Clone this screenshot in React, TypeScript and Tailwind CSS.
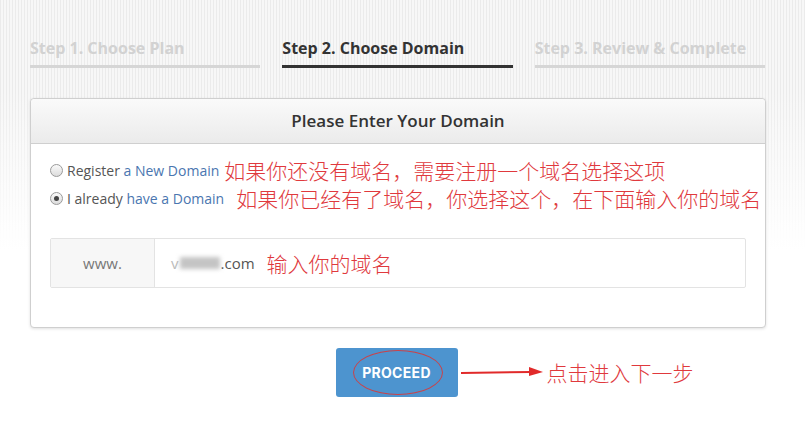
import React from 'react'

const steps = [
  { label: 'Step 1. Choose Plan', active: false },
  { label: 'Step 2. Choose Domain', active: true },
  { label: 'Step 3. Review & Complete', active: false },
]

const cjk = "shrink-0 whitespace-nowrap font-['Noto_Sans_CJK_SC',sans-serif] text-[#e0393d] text-[21px] font-light leading-none"

function Radio({ checked }: { checked: boolean }) {
  return (
    <span className="inline-flex h-[13px] w-[13px] shrink-0 items-center justify-center rounded-full border border-[#9a9a9a] bg-[linear-gradient(#fafafa,#dcdcdc)]">
      {checked && <span className="h-[5px] w-[5px] rounded-full bg-[#444]" />}
    </span>
  )
}

export default function App() {
  return (
    <div className="h-[423px] w-[805px] overflow-hidden bg-white bg-[linear-gradient(to_bottom,rgba(255,255,255,0)_0px,rgba(255,255,255,0)_90px,#fff_250px),repeating-linear-gradient(90deg,#ebebeb_0px,#ebebeb_1px,#f7f7f7_1px,#f7f7f7_3px)] font-['Open_Sans',sans-serif]">
      {/* stepper */}
      <div className="grid grid-cols-3 gap-[22px] px-[30px] pt-[37px] pr-[40px]">
        {steps.map((s) => (
          <div key={s.label}>
            <div
              className={
                'whitespace-nowrap pb-[6px] text-[16px] font-bold leading-[22px] ' +
                (s.active ? 'text-[#333]' : 'text-[#d2d2d2]')
              }
            >
              {s.label}
            </div>
            <div className={'h-[3px] ' + (s.active ? 'bg-[#333]' : 'bg-[#d6d6d6]')} />
          </div>
        ))}
      </div>

      {/* panel */}
      <div className="mx-[30px] mt-[30px] w-[736px] rounded-[4px] border border-[#cfcfcf] bg-white shadow-[0_1px_3px_rgba(0,0,0,0.12)]">
        <div className="flex h-[45px] items-center justify-center rounded-t-[4px] border-b border-[#cfcfcf] bg-[linear-gradient(#fafafa,#ebebeb)] text-[17px] font-semibold text-[#333]">
          Please Enter Your Domain
        </div>
        <div className="px-[19px] pt-[14px] pb-[39px]">
          <div className="flex h-[24px] items-center gap-[4px] text-[14px] text-[#555]">
            <Radio checked={false} />
            <span className="shrink-0 whitespace-nowrap">
              Register <span className="text-[#4a76b0]">a New Domain</span>
            </span>
            <span className={cjk + ' ml-[1px]'}>如果你还没有域名，需要注册一个域名选择这项</span>
          </div>
          <div className="flex h-[24px] items-center gap-[4px] text-[14px] text-[#555] mt-[4px]">
            <Radio checked={true} />
            <span className="shrink-0 whitespace-nowrap">
              I already <span className="text-[#4a76b0]">have a Domain</span>
            </span>
            <span className={cjk + ' ml-[8px]'}>如果你已经有了域名，你选择这个，在下面输入你的域名</span>
          </div>

          <div className="mt-[28px] flex h-[50px] w-[696px] rounded-[2px] border border-[#e3e3e3]">
            <div className="flex w-[104px] items-center justify-center border-r border-[#e3e3e3] bg-[#f7f7f7] text-[15px] text-[#777]">
              www.
            </div>
            <div className="flex items-center pl-[16px] text-[15px] text-[#555]">
              <span className="text-[#bbb]">v</span>
              <span className="mx-[1px] h-[12px] w-[40px] bg-[#c4c4c4] blur-[2px]" />
              <span>.com</span>
              <span className={cjk + ' ml-[12px]'}>输入你的域名</span>
            </div>
          </div>
        </div>
      </div>

      {/* proceed */}
      <div className="flex justify-center pt-[20px] pr-[12px]">
        <div className="relative">
          <button className="flex h-[49px] w-[122px] items-center justify-center rounded-[3px] bg-[#4d94cf] font-['Inter',sans-serif] text-[14px] font-bold tracking-[0.3px] text-white">
            <span className="relative">
              PROCEED
              <span className="absolute left-[-9px] top-[-12px] h-[45px] w-[90px] rounded-[50%] border border-[#c9434a]" />
            </span>
          </button>
          <div className="absolute left-[125px] top-[12px] flex items-center">
            <svg width="82" height="12" viewBox="0 0 82 12">
              <line x1="0" y1="7" x2="70" y2="6" stroke="#e12a2a" strokeWidth="2" />
              <polygon points="68,1 82,6 68,10" fill="#e12a2a" />
            </svg>
            <span className={cjk + ' ml-[4px] mt-[2px]'}>点击进入下一步</span>
          </div>
        </div>
      </div>
    </div>
  )
}
